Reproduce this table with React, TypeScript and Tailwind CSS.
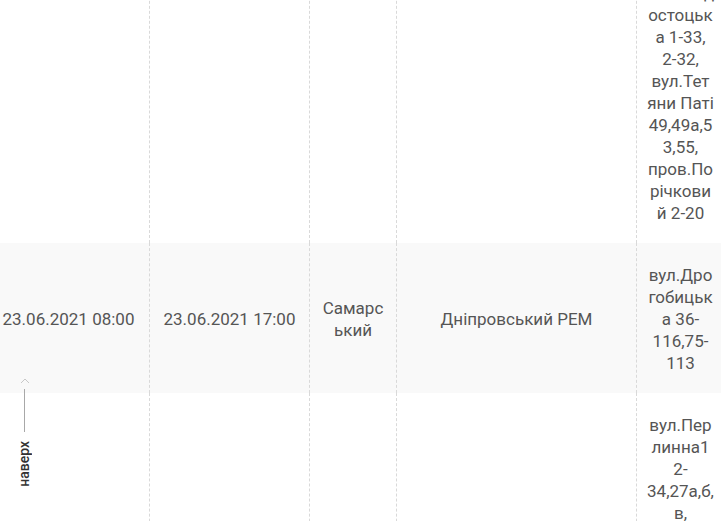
import React from "react";

const cell =
  "flex items-center justify-center text-center border-r border-dashed border-[#d9d9d9] pt-[21px] pb-[19px] px-[4px]";
const lastCell = "flex items-center justify-center text-center pt-[21px] pb-[19px] px-[4px]";

function Lines({ lines }: { lines: string[] }) {
  return (
    <div>
      {lines.map((l, i) => (
        <div key={i} className="whitespace-nowrap">
          {l}
        </div>
      ))}
    </div>
  );
}

function Row({
  bg,
  cells,
}: {
  bg: string;
  cells: (React.ReactNode | null)[];
}) {
  return (
    <div className={`grid grid-cols-[162px_160px_87px_240px_87px] ${bg}`}>
      {cells.map((c, i) => (
        <div key={i} className={i === 4 ? lastCell : cell}>
          {c}
        </div>
      ))}
    </div>
  );
}

export default function App() {
  return (
    <div className="relative w-[721px] h-[521px] overflow-hidden bg-white font-['Roboto',sans-serif] text-[17px] leading-[22px] text-[#555]">
      <div className="ml-[-12px] mt-[-39px] w-[736px]">
        <Row
          bg="bg-white"
          cells={[
            null,
            null,
            null,
            null,
            <Lines
              lines={[
                "Новогод",
                "остоцьк",
                "а 1-33,",
                "2-32,",
                "вул.Тет",
                "яни Паті",
                "49,49а,5",
                "3,55,",
                "пров.По",
                "річкови",
                "й 2-20",
              ]}
            />,
          ]}
        />
        <Row
          bg="bg-[#f9f9f9]"
          cells={[
            <span className="whitespace-nowrap">23.06.2021 08:00</span>,
            <span className="whitespace-nowrap">23.06.2021 17:00</span>,
            <Lines lines={["Самарс", "ький"]} />,
            <span className="whitespace-nowrap">Дніпровський РЕМ</span>,
            <Lines lines={["вул.Дро", "гобицьк", "а 36-", "116,75-", "113"]} />,
          ]}
        />
        <Row
          bg="bg-white"
          cells={[
            null,
            null,
            null,
            null,
            <Lines
              lines={[
                "вул.Пер",
                "линна1",
                "2-",
                "34,27а,б,",
                "в,",
                "вул.Ліс",
                "ова 1-15",
              ]}
            />,
          ]}
        />
      </div>

      {/* back to top widget */}
      <div className="absolute left-[17px] top-[378px] flex flex-col items-center w-[15px]">
        <svg width="10" height="6" viewBox="0 0 10 6" className="block">
          <polyline points="1,5 5,1 9,5" fill="none" stroke="#c8c8c8" strokeWidth="1" />
        </svg>
        <div className="mt-[5px] w-px h-[43px] bg-[#a8a8a8]" />
        <div className="mt-[9px] [writing-mode:vertical-rl] rotate-180 text-[14px] leading-[15px] font-medium text-[#333]">
          наверх
        </div>
      </div>
    </div>
  );
}
